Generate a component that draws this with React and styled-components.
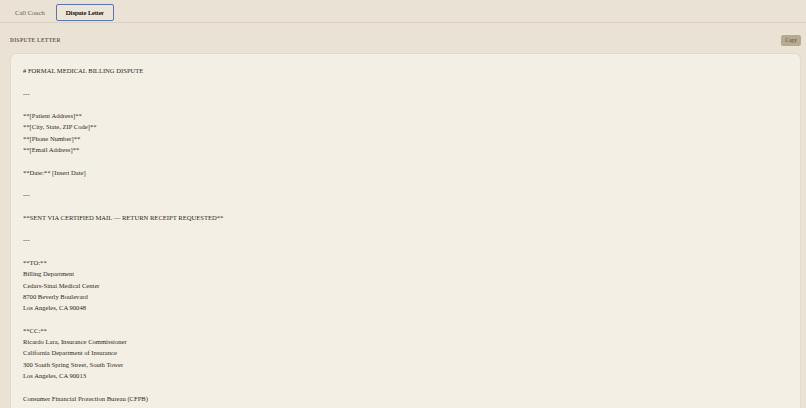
import React from "react";
import styled, { createGlobalStyle } from "styled-components";

const Global = createGlobalStyle`
  html, body { margin: 0; padding: 0; background: #e9e2d5; }
  body { font-family: "Liberation Serif", "DejaVu Serif", serif; color: #3b3228; }
  * { box-sizing: border-box; }
`;

const Page = styled.div`
  width: 806px;
  height: 408px;
  overflow: hidden;
  background: #e9e2d5;
  display: flex;
  flex-direction: column;
`;

const TabBar = styled.div`
  display: flex;
  align-items: flex-end;
  gap: 1px;
  height: 23px;
  padding: 0 5px;
  border-bottom: 1px solid #d9d0bf;
`;

const Tab = styled.button`
  font-family: inherit;
  font-size: 6.6px;
  height: 17px;
  margin-bottom: 1px;
  padding: 0 9px;
  border: 1px solid ${(p) => (p.$active ? "#5876ad" : "transparent")};
  border-radius: 2px;
  background: ${(p) => (p.$active ? "#ece5d8" : "transparent")};
  color: ${(p) => (p.$active ? "#221c16" : "#6a5e50")};
  font-weight: 400;
  text-shadow: ${(p) => (p.$active ? "0 0 0.3px #221c16" : "none")};
  cursor: pointer;
`;

const Body = styled.div`
  flex: 1;
  display: flex;
  flex-direction: column;
  padding: 11px 5px 0 10px;
  min-height: 0;
`;

const Header = styled.div`
  display: flex;
  align-items: center;
  justify-content: space-between;
  height: 12px;
  margin-bottom: 7px;
`;

const Label = styled.div`
  font-size: 5.3px;
  font-weight: 700;
  letter-spacing: 0.35px;
  color: #6a6054;
  text-transform: uppercase;
`;

const CopyButton = styled.button`
  font-family: inherit;
  font-size: 5.4px;
  height: 11px;
  padding: 0 4px;
  border: none;
  border-radius: 2px;
  background: #b7aa92;
  color: #5a4e40;
`;

const Card = styled.div`
  flex: 1;
  background: #f3efe5;
  border: 1px solid #e2dacb;
  border-bottom: none;
  border-radius: 6px 6px 0 0;
  padding: 11px 12px 0 12px;
  overflow: hidden;
`;

const Letter = styled.pre`
  margin: 0;
  font-family: "Liberation Serif", "DejaVu Serif", serif;
  font-size: 6.6px;
  line-height: 11.3px;
  white-space: pre-wrap;
  color: #2f2821;
`;

const text = `# FORMAL MEDICAL BILLING DISPUTE

---

**[Patient Address]**
**[City, State, ZIP Code]**
**[Phone Number]**
**[Email Address]**

**Date:** [Insert Date]

---

**SENT VIA CERTIFIED MAIL — RETURN RECEIPT REQUESTED**

---

**TO:**
Billing Department
Cedars-Sinai Medical Center
8700 Beverly Boulevard
Los Angeles, CA 90048

**CC:**
Ricardo Lara, Insurance Commissioner
California Department of Insurance
300 South Spring Street, South Tower
Los Angeles, CA 90013

Consumer Financial Protection Bureau (CFPB)
1700 G Street NW
Washington, DC 20552`;

export default function App() {
  return (
    <Page>
      <Global />
      <TabBar>
        <Tab>Call Couch</Tab>
        <Tab $active>Dispute Letter</Tab>
      </TabBar>
      <Body>
        <Header>
          <Label>Dispute Letter</Label>
          <CopyButton>Copy</CopyButton>
        </Header>
        <Card>
          <Letter>{text}</Letter>
        </Card>
      </Body>
    </Page>
  );
}
